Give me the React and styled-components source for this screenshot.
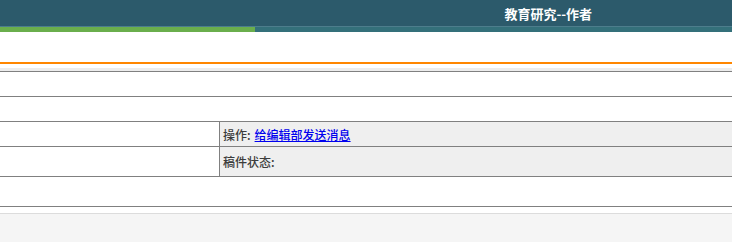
import React from 'react';
import styled, { createGlobalStyle } from 'styled-components';

const GlobalStyle = createGlobalStyle`
  html, body {
    margin: 0;
    padding: 0;
    background: #f5f5f5;
    font-family: "Noto Sans CJK SC", "Liberation Sans", sans-serif;
    font-size: 12px;
    color: #444;
  }
`;

const Page = styled.div`
  width: 732px;
  background: #fff;
`;

const Header = styled.div`
  height: 26px;
  background: #2c5a6b;
  border-bottom: 1px solid #4d7d8c;
  display: flex;
  align-items: center;
  justify-content: flex-end;
  padding-right: 140px;
`;

const Title = styled.h1`
  margin: 0;
  font-size: 13px;
  font-weight: bold;
  color: #fff;
  line-height: 1;
`;

const Strip = styled.div`
  display: flex;
  height: 5px;
  background: #34707a;
`;

const Progress = styled.div`
  width: 255px;
  background: #6aae4c;
`;

const Spacer = styled.div`
  height: ${p => p.h}px;
  background: ${p => p.bg || '#fff'};
`;

const OrangeRule = styled.div`
  height: 2px;
  background: #ff8600;
`;

const Table = styled.div`
  border-top: 1px solid #808080;
`;

const Row = styled.div`
  display: grid;
  grid-template-columns: ${p => (p.split ? '219px 1fr' : '1fr')};
  height: ${p => p.h}px;
  border-bottom: 1px solid #808080;
`;

const Cell = styled.div`
  display: flex;
  align-items: center;
  padding-left: 3px;
  background: ${p => (p.shade ? '#efefef' : '#fff')};
  border-left: ${p => (p.shade ? '1px solid #808080' : 'none')};
`;

const Label = styled.span`
  color: #3c3c3c;
  font-weight: 500;
  margin-right: 4px;
`;

const Link = styled.a`
  color: #0000ee;
  text-decoration: underline;
  font-weight: 500;
  cursor: pointer;
`;

const Footer = styled.div`
  height: 29px;
  background: #f5f5f5;
  border-top: 1px solid #dcdcdc;
`;

export default function App() {
  return (
    <>
      <GlobalStyle />
      <Page>
        <Header>
          <Title>教育研究--作者</Title>
        </Header>
        <Strip>
          <Progress />
        </Strip>
        <Spacer h={30} />
        <OrangeRule />
        <Spacer h={4} />
        <Spacer h={3} bg="#ececec" />
        <Table>
          <Row h={24} />
          <Row h={24} />
          <Row h={24} split>
            <Cell />
            <Cell shade>
              <Label>操作:</Label>
              <Link>给编辑部发送消息</Link>
            </Cell>
          </Row>
          <Row h={29} split>
            <Cell />
            <Cell shade>
              <Label>稿件状态:</Label>
            </Cell>
          </Row>
          <Row h={29} />
        </Table>
        <Spacer h={6} />
      </Page>
      <Footer />
    </>
  );
}
